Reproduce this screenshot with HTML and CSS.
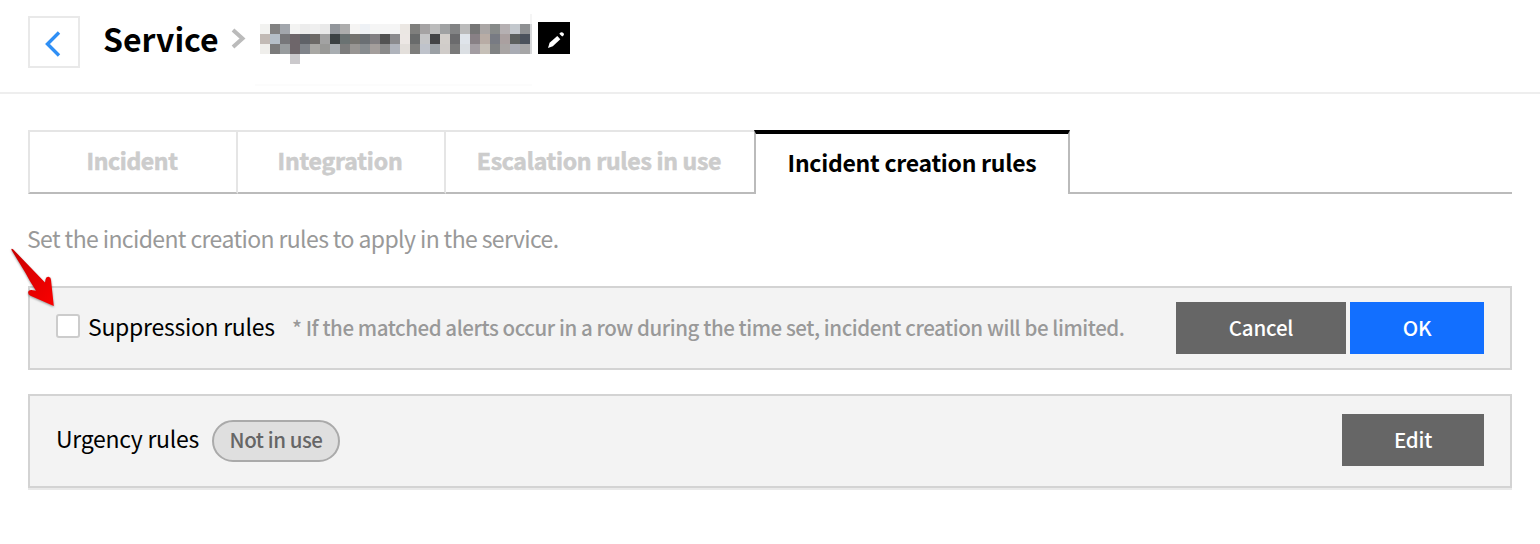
FILE: index.html
```
<!DOCTYPE html>
<html lang="en">
<head>
<meta charset="utf-8">
<title>Service</title>
<link rel="stylesheet" href="styles.css">
</head>
<body>
<header class="header">
  <button class="back" aria-label="Back"><svg width="48" height="48" viewBox="0 0 48 48"><path d="M29 14.500L17.500 26L29 37.500" fill="none" stroke="#2f8ff5" stroke-width="3.400"/></svg></button>
  <h1 class="title">Service</h1>
  <svg class="crumb" width="16" height="22" viewBox="0 0 16 22"><path d="M2 3L11.500 11.500L2 20" fill="none" stroke="#bbb" stroke-width="4"/></svg>
  <svg class="name" id="name" width="272" height="74" viewBox="0 0 272 74" shape-rendering="crispEdges"></svg>
  <button class="pencil" aria-label="Edit name"><svg width="32" height="32" viewBox="0 0 32 32" fill="#fff"><path d="M10 26L11.600 20.800L19.300 14L22.300 17.200L14.800 24.200Z"/><path d="M21.300 11.800L22.600 10.400Q24.200 9.800 25.600 11.200Q26.400 12.500 25.500 13.400L24.200 14.600Z"/></svg></button>
</header>
<main class="main">
  <nav class="tabs">
    <a class="tab first"><span class="t-incident">Incident</span></a>
    <a class="tab"><span class="t-integration">Integration</span></a>
    <a class="tab wide"><span class="t-escalation">Escalation rules in use</span></a>
    <a class="tab active"><span class="t-creation">Incident creation rules</span></a>
    <span class="rest"></span>
  </nav>
  <p class="desc">Set the incident creation rules to apply in the service.</p>
  <section class="panel">
    <span class="checkbox"></span>
    <span class="label">Suppression rules</span>
    <span class="hint">* If the matched alerts occur in a row during the time set, incident creation will be limited.</span>
    <div class="actions"><button class="btn cancel">Cancel</button><button class="btn ok">OK</button></div>
  </section>
  <section class="panel second">
    <span class="label urgency">Urgency rules</span>
    <span class="badge">Not in use</span>
    <div class="actions"><button class="btn edit">Edit</button></div>
  </section>
</main>
<svg class="arrow" width="48" height="64" viewBox="0 0 48 64"><defs><linearGradient id="red" x1="0" y1="0" x2="1" y2="1"><stop offset="0" stop-color="#c90000"/><stop offset="1" stop-color="#fa0000"/></linearGradient></defs><path d="M2.500 5Q2 3.200 4 4.200L36 37.500L36.500 34.500Q37 31.500 39.500 31.800Q42 32.300 42 35L44.800 61L21.500 50.800Q18.300 49 19.500 46.300Q21 44.500 24 45.300L27 45.800Q20.500 36 16.500 28Z" fill="url(#red)"/></svg>
<script src="mosaic.js"></script>
</body>
</html>
```
FILE: styles.css
```
* { box-sizing: border-box; }
body { margin: 0; width: 1540px; height: 544px; overflow: hidden; background: #fff; color: #000; font-family: "Noto Sans CJK KR", "Noto Sans", sans-serif; }
button { font: inherit; border: 0; padding: 0; margin: 0; }
svg { display: block; }
.header { height: 94px; border-bottom: 2px solid #eee; display: flex; align-items: flex-start; padding-left: 28px; }
.back { width: 52px; height: 52px; margin-top: 16px; border: 2px solid #e9e9e9; background: #fff; }
.title { margin: 14px 0 0 23px; width: 128px; font-size: 32px; line-height: 48px; font-weight: 700; white-space: nowrap; }
.crumb { margin-top: 27px; }
.name { margin: 14px 0 0 13px; overflow: visible; }
.pencil { width: 32px; height: 32px; margin: 22px 0 0 6px; background: #000; }
.main { padding: 36px 28px 0; }
.tabs { display: flex; height: 64px; }
.tab { width: 208px; border-top: 2px solid #e5e5e5; border-right: 2px solid #e5e5e5; border-bottom: 2px solid #bbb; display: flex; justify-content: center; padding-right: 2px; font-size: 23px; letter-spacing: -.27px; line-height: 56px; font-weight: 700; color: #ccc; white-space: nowrap; -webkit-text-stroke: .6px #ccc; }
.tab.first { width: 210px; border-left: 2px solid #e5e5e5; }
.tab.wide { width: 308px; border-right: 0; }
.tab.active { width: 316px; color: #000; border: 2px solid #bbb; border-top: 4px solid #000; border-bottom: 0; padding: 0; -webkit-text-stroke: 0; }
.t-incident { letter-spacing: -.4px; }
.t-integration { letter-spacing: -.15px; }
.rest { flex: 1; border-bottom: 2px solid #bbb; }
.desc { margin: 26px 0 0 -1px; height: 36px; line-height: 36px; font-size: 23px; letter-spacing: -.61px; color: #999; white-space: nowrap; }
.panel { height: 84px; margin-top: 30px; border: 2px solid #d3d3d3; background: #f3f3f3; padding: 0 26px; display: flex; align-items: center; white-space: nowrap; }
.panel.second { height: 94px; margin-top: 24px; box-shadow: 0 2px #e9e9e9; }
.checkbox { flex: none; width: 24px; height: 24px; margin-bottom: 5px; border: 2px solid #ccc; border-radius: 3px; background: #fff; }
.label { flex: none; margin: 0 0 4px 8px; width: 204px; font-size: 23px; letter-spacing: -.28px; line-height: 36px; }
.label.urgency { margin: 0 0 6px; width: 156px; }
.hint { flex: none; margin-bottom: 3px; font-size: 20.5px; letter-spacing: -.43px; line-height: 36px; font-weight: 500; color: #999; }
.actions { margin-left: auto; display: flex; gap: 4px; }
.btn { height: 52px; background: #666; color: #fff; font-size: 20.5px; letter-spacing: -.2px; line-height: 50px; padding-bottom: 2px; font-weight: 500; }
.cancel { width: 170px; }
.ok { width: 134px; background: #126fff; }
.second .actions { margin-bottom: 2px; }
.edit { width: 142px; }
.badge { width: 128px; height: 42px; border: 2px solid #aaa; border-radius: 21px; background: #dfdfdf; color: #666; font-size: 20.5px; letter-spacing: -.45px; font-weight: 500; line-height: 35px; text-align: center; }
.arrow { position: absolute; left: 9px; top: 245px; filter: drop-shadow(0 1px 1px rgba(0,0,0,.4)); }
```
FILE: mosaic.js
```
// Pixelated service name: three rows of 10px cells.
const rows = [
  "f2f2f0 828282 a2a6ac f3f3f2 ececec efefef e9e9e9 92969b adadad f5f4f3 eef1f5 f5f5f5 f5f5f5 f5f5f5 ebe7e3 7f7f7d a5a3a4 bcbcbc a0a2a3 828384 bbbbbb 767676 aaa6a5 878a89 b5b0b2 c3c8cd 8e9092",
  "c2bab5 b5bfc8 77777a 6e666a 5f6268 6d6a67 a2a2a2 3c4244 6a7272 75736f 6a6f73 827f82 525252 8b8b8e ece7e4 696b6b c4c5c7 434446 d2ceca 6b6b6d dfe4ea 888085 b8aca5 787b83 aaa0a0 5c605f 4b525c",
  "efeeeb 7b7b7b 989c9e 6e666a 80848a a9a8a4 999997 a9aeb2 7c7c7c 989593 878c8f a49e9c 8a8a8a b0b4bc e3dfdb 7e7e7c bfc3cb 9ba0a5 d0ccc9 7a7a7a dbdfe3 a39da2 c6c0b8 808283 a9a5a4 a9acb4 a6a6a7"
];
const svg = document.getElementById("name");
function cell(x, y, w, h, color) {
  const r = document.createElementNS("http://www.w3.org/2000/svg", "rect");
  for (const [k, v] of Object.entries({ x, y, width: w, height: h, fill: color })) r.setAttribute(k, v);
  svg.appendChild(r);
}
rows.forEach((row, j) => row.split(" ").forEach((c, i) => cell(i * 10, 10 + j * 10, 10, 10, "#" + c)));
cell(30, 40, 10, 10, "#cbc9cc");
cell(270, 0, 2, 10, "#f5f5f5");
cell(270, 10, 2, 30, "#d5d6d8");
cell(-5, 70, 277, 2, "#fcfcfc");
```
